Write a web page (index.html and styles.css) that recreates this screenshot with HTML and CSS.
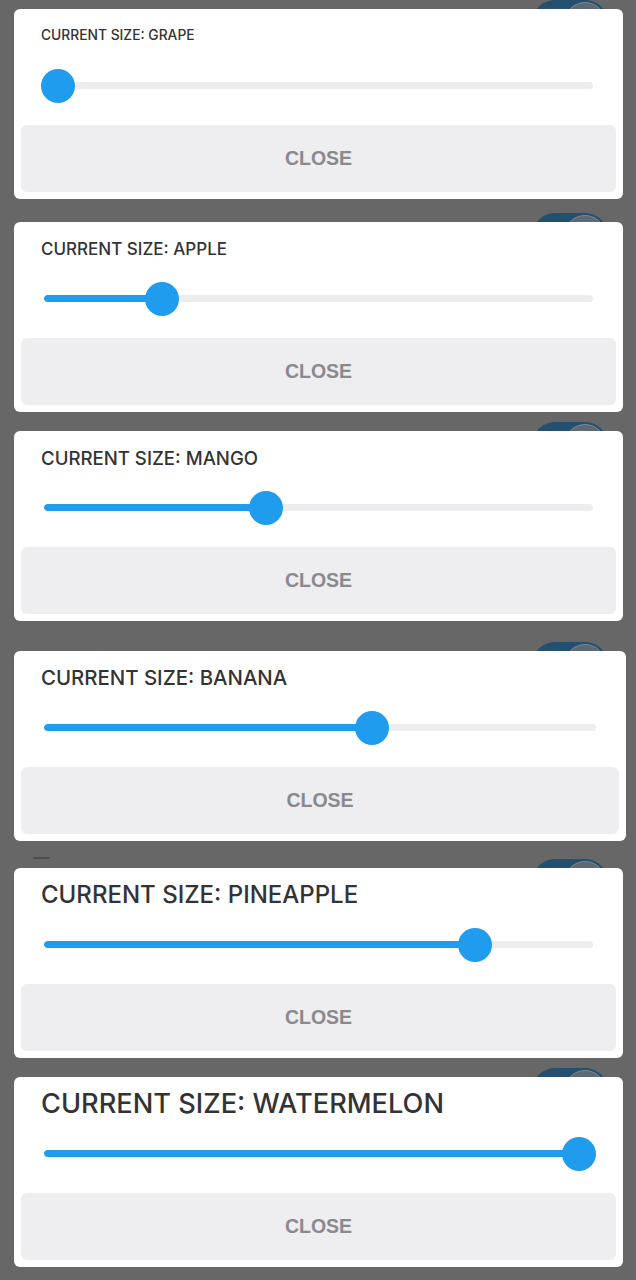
FILE: index.html
```html
<!DOCTYPE html>
<html lang="en">
<head>
<meta charset="utf-8">
<title>Current size</title>
<link rel="stylesheet" href="styles.css">
</head>
<body>
<main class="screen">
  <div class="item item-1">
    <span class="toggle"><span class="knob"></span></span>
    <section class="card">
      <div class="label-row"><span class="label size-1">CURRENT SIZE: GRAPE</span></div>
      <div class="slider">
        <div class="track"><div class="fill" style="width: calc(14px + (100% - 28px) * 0)"></div></div>
        <div class="lane"><span class="thumb" style="left: 0%"></span></div>
      </div>
      <button class="close" type="button">CLOSE</button>
    </section>
  </div>

  <div class="item item-2">
    <span class="toggle"><span class="knob"></span></span>
    <section class="card">
      <div class="label-row"><span class="label size-2">CURRENT SIZE: APPLE</span></div>
      <div class="slider">
        <div class="track"><div class="fill" style="width: calc(14px + (100% - 28px) * 0.2)"></div></div>
        <div class="lane"><span class="thumb" style="left: 20%"></span></div>
      </div>
      <button class="close" type="button">CLOSE</button>
    </section>
  </div>

  <div class="item item-3">
    <span class="toggle"><span class="knob"></span></span>
    <section class="card">
      <div class="label-row"><span class="label size-3">CURRENT SIZE: MANGO</span></div>
      <div class="slider">
        <div class="track"><div class="fill" style="width: calc(14px + (100% - 28px) * 0.4)"></div></div>
        <div class="lane"><span class="thumb" style="left: 40%"></span></div>
      </div>
      <button class="close" type="button">CLOSE</button>
    </section>
  </div>

  <div class="item item-4">
    <span class="toggle"><span class="knob"></span></span>
    <section class="card card-wide">
      <div class="label-row"><span class="label size-4">CURRENT SIZE: BANANA</span></div>
      <div class="slider">
        <div class="track"><div class="fill" style="width: calc(14px + (100% - 28px) * 0.6)"></div></div>
        <div class="lane"><span class="thumb" style="left: 60%"></span></div>
      </div>
      <button class="close" type="button">CLOSE</button>
    </section>
  </div>

  <div class="item item-5">
    <span class="mark"></span>
    <span class="toggle"><span class="knob"></span></span>
    <section class="card">
      <div class="label-row"><span class="label size-5">CURRENT SIZE: PINEAPPLE</span></div>
      <div class="slider">
        <div class="track"><div class="fill" style="width: calc(14px + (100% - 28px) * 0.8)"></div></div>
        <div class="lane"><span class="thumb" style="left: 80%"></span></div>
      </div>
      <button class="close" type="button">CLOSE</button>
    </section>
  </div>

  <div class="item item-6">
    <span class="toggle"><span class="knob"></span></span>
    <section class="card">
      <div class="label-row"><span class="label size-6">CURRENT SIZE: WATERMELON</span></div>
      <div class="slider">
        <div class="track"><div class="fill" style="width: calc(14px + (100% - 28px) * 1)"></div></div>
        <div class="lane"><span class="thumb" style="left: 100%"></span></div>
      </div>
      <button class="close" type="button">CLOSE</button>
    </section>
  </div>
</main>
</body>
</html>
```

FILE: styles.css
```css
* { box-sizing: border-box; }

html, body {
  margin: 0;
  padding: 0;
  background: #676767;
}

.screen {
  width: 636px;
  min-height: 1280px;
  padding: 9px 13px 0 14px;
  display: flex;
  flex-direction: column;
  background: #676767;
  font-family: Inter, Roboto, "Liberation Sans", sans-serif;
}

.item {
  position: relative;
  width: 609px;
}

.item-2 { margin-top: 23px; }
.item-3 { margin-top: 19px; }
.item-4 { margin-top: 30px; }
.item-5 { margin-top: 27px; }
.item-6 { margin-top: 19px; }

.toggle {
  position: absolute;
  top: -9px;
  right: 15px;
  width: 76px;
  height: 46px;
  border-radius: 23px;
  background: #22506e;
  z-index: 0;
}

.knob {
  position: absolute;
  top: 2px;
  right: 2px;
  width: 42px;
  height: 42px;
  border-radius: 50%;
  background: #5d6a73;
  border: 1.5px solid #7d878e;
}

.mark {
  position: absolute;
  top: -11px;
  left: 19px;
  width: 17px;
  height: 2px;
  background: #4d4d4d;
  border-radius: 1px;
}

.card {
  position: relative;
  z-index: 1;
  width: 609px;
  height: 190px;
  background: #ffffff;
  border-radius: 6px;
  padding: 0 7px 7px;
  display: flex;
  flex-direction: column;
}

.card-wide { width: 612px; }

.label-row {
  height: 54px;
  padding-left: 20px;
  display: flex;
  align-items: center;
}

.label {
  color: #333335;
  font-weight: 500;
  line-height: 1;
  white-space: nowrap;
}

.size-1 { font-size: 13.8px; }
.size-2 { font-size: 17px; }
.size-3 { font-size: 18.6px; }
.size-4 { font-size: 20.4px; }
.size-5 { font-size: 24px; }
.size-6 { font-size: 27.2px; }

.slider {
  position: relative;
  height: 45px;
  margin: 0 23px;
  display: flex;
  align-items: center;
}

.track {
  width: 100%;
  height: 7px;
  border-radius: 4px;
  background: #ededef;
  overflow: hidden;
}

.fill {
  height: 100%;
  background: #1f9cee;
  border-radius: 4px;
}

.lane {
  position: absolute;
  top: 0;
  bottom: 0;
  left: 14px;
  right: 14px;
}

.thumb {
  position: absolute;
  top: 50%;
  width: 34px;
  height: 34px;
  border-radius: 50%;
  background: #1f9cee;
  transform: translate(-50%, -50%);
}

.close {
  margin-top: auto;
  height: 67px;
  width: 100%;
  border: 0;
  border-radius: 6px;
  background: #eeeef0;
  color: #89898e;
  font-family: "Liberation Sans", Arial, sans-serif;
  font-weight: 700;
  font-size: 19.5px;
  letter-spacing: 0;
  padding: 0;
  cursor: pointer;
}
```
